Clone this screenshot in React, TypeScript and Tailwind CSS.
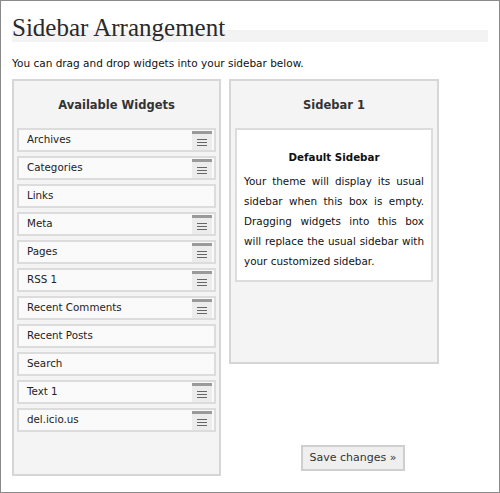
import React from 'react';

const widgets: { name: string; handle: boolean }[] = [
  { name: 'Archives', handle: true },
  { name: 'Categories', handle: true },
  { name: 'Links', handle: false },
  { name: 'Meta', handle: true },
  { name: 'Pages', handle: true },
  { name: 'RSS 1', handle: true },
  { name: 'Recent Comments', handle: true },
  { name: 'Recent Posts', handle: false },
  { name: 'Search', handle: false },
  { name: 'Text 1', handle: true },
  { name: 'del.icio.us', handle: true },
];

const sidebarLines = [
  'Your theme will display its usual',
  'sidebar when this box is empty.',
  'Dragging widgets into this box',
  'will replace the usual sidebar with',
];

const Handle: React.FC = () => (
  <div className="absolute right-[2px] top-[1px] w-[20px] h-[19px] flex flex-col">
    <div className="h-[3px] bg-[#9a9a9a]" />
    <div className="flex-1 bg-[#ececec] flex flex-col items-center justify-center gap-[2px]">
      <div className="w-[10px] h-[1px] bg-[#666]" />
      <div className="w-[10px] h-[1px] bg-[#666]" />
      <div className="w-[10px] h-[1px] bg-[#666]" />
    </div>
  </div>
);

const App: React.FC = () => {
  return (
    <div
      className="w-[500px] h-[493px] border border-[#8a8a8a] bg-white text-[#222] relative"
      style={{ fontFamily: '"DejaVu Sans", sans-serif' }}
    >
      <div className="px-[11px] pt-[12px]">
        <div className="relative h-[30px]">
          <div className="absolute left-0 right-0 top-[17px] h-[12px] bg-[#f3f3f3]" />
          <h1
            className="relative text-[25px] leading-[30px] text-[#2a2a2a]"
            style={{ fontFamily: '"Liberation Serif", serif' }}
          >
            Sidebar Arrangement
          </h1>
        </div>
        <p className="mt-[14px] text-[10.5px] leading-[12px] text-[#111]">
          You can drag and drop widgets into your sidebar below.
        </p>

        <div className="flex gap-[8px] mt-[10px] items-start">
          <div className="w-[209px] h-[397px] border-2 border-[#d6d6d6] bg-[#f4f4f4] px-[3px]">
            <h2 className="text-center font-bold text-[11.5px] text-[#333] pt-[16px] h-[47px]">
              Available Widgets
            </h2>
            <div className="flex flex-col gap-[4px]">
              {widgets.map((w) => (
                <div
                  key={w.name}
                  className="relative h-[24px] border-2 border-[#dcdcdc] bg-[#fafafa] flex items-center pl-[8px] text-[10.3px] text-[#222]"
                >
                  {w.name}
                  {w.handle && <Handle />}
                </div>
              ))}
            </div>
          </div>

          <div className="flex flex-col">
            <div className="w-[210px] h-[285px] border-2 border-[#d6d6d6] bg-[#f4f4f4] px-[4px]">
              <h2 className="text-center font-bold text-[11.5px] text-[#333] pt-[16px] h-[47px]">
                Sidebar 1
              </h2>
              <div className="border-2 border-[#dcdcdc] bg-white px-[7px] pt-[21px] h-[154px]">
                <h3 className="text-center font-bold text-[10.3px] leading-[12px] text-[#111] mb-[8px]">
                  Default Sidebar
                </h3>
                <div className="text-[10.4px] leading-[20px] text-[#111]">
                  {sidebarLines.map((l) => (
                    <div key={l} className="whitespace-nowrap text-justify [text-align-last:justify]">
                      {l}
                    </div>
                  ))}
                  <div>your customized sidebar.</div>
                </div>
              </div>
            </div>
            <button className="mt-[81px] ml-[72px] w-[104px] h-[26px] border-2 border-[#cfcfcf] bg-[#efefef] text-[11px] text-[#333]">
              Save changes »
            </button>
          </div>
        </div>
      </div>
    </div>
  );
};

export default App;
